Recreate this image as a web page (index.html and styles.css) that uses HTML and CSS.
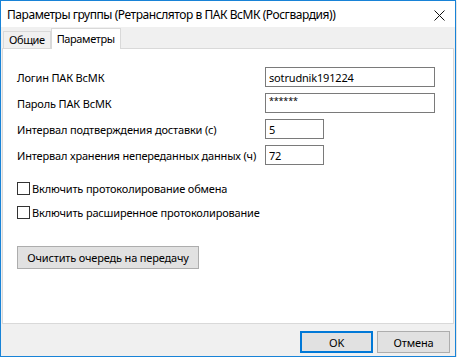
FILE: index.html
```html
<!DOCTYPE html>
<html lang="ru">
<head>
  <meta charset="UTF-8" />
  <title>Параметры группы</title>
  <link rel="stylesheet" href="styles.css">
</head>
<body>
  <div class="window">
    <div class="titlebar">
      <span class="title">Параметры группы (Ретранслятор в ПАК ВсМК (Росгвардия))</span>
      <svg class="close" width="11" height="11" viewBox="0 0 11 11">
        <path d="M0.5 0.5 L10.5 10.5 M10.5 0.5 L0.5 10.5" stroke="#111" stroke-width="1" fill="none"/>
      </svg>
    </div>

    <div class="tabs">
      <div class="tab">Общие</div>
      <div class="tab active">Параметры</div>
    </div>

    <div class="panel">
      <div class="row">
        <label>Логин ПАК ВсМК</label>
        <input class="field wide" type="text" value="sotrudnik191224" />
      </div>
      <div class="row">
        <label>Пароль ПАК ВсМК</label>
        <input class="field wide pass" type="text" value="******" />
      </div>
      <div class="row gap">
        <label>Интервал подтверждения доставки (с)</label>
        <input class="field short" type="text" value="5" />
      </div>
      <div class="row">
        <label>Интервал хранения непереданных данных (ч)</label>
        <input class="field short" type="text" value="72" />
      </div>

      <div class="check first"><span class="box"></span>Включить протоколирование обмена</div>
      <div class="check"><span class="box"></span>Включить расширенное протоколирование</div>

      <button class="btn clear">Очистить очередь на передачу</button>
    </div>

    <div class="footer">
      <button class="btn ok">OK</button>
      <button class="btn">Отмена</button>
    </div>
  </div>
</body>
</html>
```

FILE: styles.css
```css
body { margin: 0; background: #fff; font-family: "Noto Sans", sans-serif; font-size: 11px; letter-spacing: -0.17px; color: #000; }
.window { width: 456px; height: 357px; box-sizing: border-box; border: 1px solid #1883d7; background: #f0f0f0; display: flex; flex-direction: column; padding: 0 1px; box-shadow: 1px 1px 2px rgba(0,0,0,0.15); }
.titlebar { height: 26px; margin: 0 -1px; background: #fff; display: flex; align-items: center; padding: 0 0 0 6px; position: relative; }
.title { font-size: 12px; letter-spacing: -0.45px; }
.close { position: absolute; left: 433px; top: 9px; }
.tabs { display: flex; align-items: flex-end; height: 21px; padding-left: 1px; letter-spacing: -0.4px; }
.tab { height: 17px; line-height: 16px; padding: 0 5px; border: 1px solid #d9d9d9; border-bottom: none; box-sizing: border-box; background: #f0f0f0; }
.tab.active { height: 21px; line-height: 19px; background: #fff; margin-bottom: -1px; position: relative; z-index: 1; padding: 0 5px; }
.panel { height: 276px; box-sizing: border-box; border: 1px solid #d9d9d9; background: #fff; padding: 18px 14px 0; }
.row { display: flex; align-items: center; height: 20px; margin-bottom: 6px; }
.row.gap { margin-top: 6px; }
.row label { width: 248px; }
.field { height: 20px; box-sizing: border-box; border: 1px solid #7a7a7a; padding: 0 3px; font: inherit; letter-spacing: inherit; color: #000; }
.field.wide { width: 170px; }
.field.short { width: 59px; }
.field.pass { font-size: 9px; padding-bottom: 5px; }
.check { display: flex; align-items: center; height: 13px; margin-bottom: 11px; }
.check.first { margin-top: 17px; }
.box { width: 13px; height: 13px; box-sizing: border-box; border: 1px solid #333; background: #fff; margin-right: 2px; }
.btn { height: 22px; box-sizing: border-box; border: 1px solid #adadad; background: #e1e1e1; font: inherit; letter-spacing: inherit; color: #000; padding: 0; width: 73px; }
.btn.clear { width: 182px; height: 23px; margin-top: 16px; }
.footer { flex: 1; display: flex; justify-content: flex-end; gap: 4px; padding: 7px 4px 0 0; }
.btn.ok { border: 2px solid #0078d7; }
```
